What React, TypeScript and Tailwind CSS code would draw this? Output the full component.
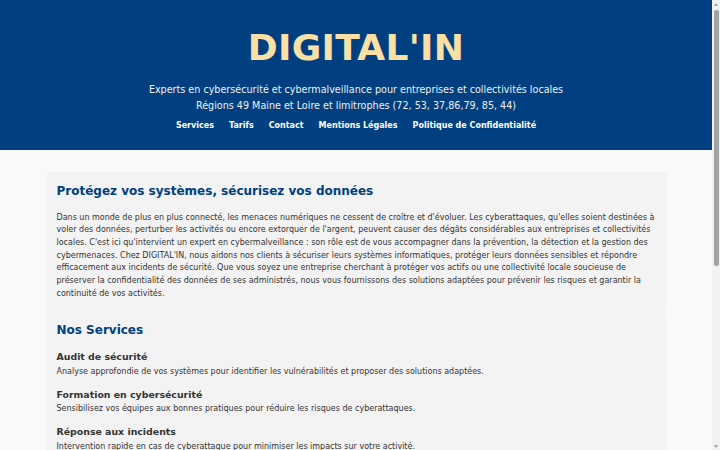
import React from "react";

const services = [
  {
    t: "Audit de sécurité",
    d: "Analyse approfondie de vos systèmes pour identifier les vulnérabilités et proposer des solutions adaptées.",
  },
  {
    t: "Formation en cybersécurité",
    d: "Sensibilisez vos équipes aux bonnes pratiques pour réduire les risques de cyberattaques.",
  },
  {
    t: "Réponse aux incidents",
    d: "Intervention rapide en cas de cyberattaque pour minimiser les impacts sur votre activité.",
  },
  {
    t: "Accompagnement et conseil",
    d: "Un suivi personnalisé pour renforcer durablement la sécurité de votre organisation.",
  },
];

function Scrollbar() {
  return (
    <div className="w-[8px] h-screen bg-[#f1f1f1] flex flex-col items-center shrink-0">
      <div className="h-[8px] flex items-center justify-center">
        <div className="w-0 h-0 border-x-[2px] border-x-transparent border-b-[3px] border-b-[#a0a0a0]" />
      </div>
      <div className="mt-[2px] w-[5px] h-[256px] rounded-[2px] bg-[#a3a3a3]" />
      <div className="flex-1" />
      <div className="h-[8px] flex items-center justify-center">
        <div className="w-0 h-0 border-x-[2px] border-x-transparent border-t-[3px] border-t-[#a0a0a0]" />
      </div>
    </div>
  );
}

export default function App() {
  return (
    <div
      className="h-screen flex bg-[#f9f9f9] text-[#333]"
      style={{ fontFamily: '"DejaVu Sans", Verdana, sans-serif' }}
    >
      <div className="flex-1 min-w-0 h-screen overflow-hidden">
        <header className="bg-[#004080] h-[150px] flex flex-col items-center text-center">
          <h1 className="mt-[26px] text-[36px] leading-[44px] font-bold text-[#fbe0a5] tracking-[0.3px]">
            DIGITAL'IN
          </h1>
          <div className="mt-[12px] text-[9.6px] leading-[16px] text-[#f0f0f0]">
            <p>Experts en cybersécurité et cybermalveillance pour entreprises et collectivités locales</p>
            <p>Régions 49 Maine et Loire et limitrophes (72, 53, 37,86,79, 85, 44)</p>
          </div>
          <nav className="mt-[5px] flex gap-[15px] text-[8px] leading-[13px] font-bold text-white">
            <span>Services</span>
            <span>Tarifs</span>
            <span>Contact</span>
            <span>Mentions Légales</span>
            <span>Politique de Confidentialité</span>
          </nav>
        </header>

        <main className="w-[619px] mx-auto pt-[22px] pb-[20px] flex flex-col gap-[2px]">
          <section className="bg-[#f3f3f3] px-[10px] pt-[11px] pb-[10px] rounded-[3px] shadow-[0_1px_2px_rgba(0,0,0,0.04)]">
            <h2 className="text-[12px] leading-[16px] font-bold text-[#004080]">
              Protégez vos systèmes, sécurisez vos données
            </h2>
            <p className="mt-[12.5px] text-[8px] leading-[12.7px]">
              Dans un monde de plus en plus connecté, les menaces numériques ne cessent de croître et d'évoluer. Les
              cyberattaques, qu'elles soient destinées à voler des données, perturber les activités ou encore
              extorquer de l'argent, peuvent causer des dégâts considérables aux entreprises et collectivités locales.
              C'est ici qu'intervient un expert en cybermalveillance : son rôle est de vous accompagner dans la
              prévention, la détection et la gestion des cybermenaces. Chez DIGITAL'IN, nous aidons nos clients à
              sécuriser leurs systèmes informatiques, protéger leurs données sensibles et répondre efficacement aux
              incidents de sécurité. Que vous soyez une entreprise cherchant à protéger vos actifs ou une collectivité
              locale soucieuse de préserver la confidentialité des données de ses administrés, nous vous fournissons
              des solutions adaptées pour prévenir les risques et garantir la continuité de vos activités.
            </p>
          </section>

          <section className="bg-[#f3f3f3] px-[10px] pt-[10px] pb-[12px] rounded-[3px] shadow-[0_1px_2px_rgba(0,0,0,0.04)]">
            <h2 className="text-[12px] leading-[16px] font-bold text-[#004080]">Nos Services</h2>
            <div className="mt-[12px] flex flex-col gap-[10px]">
              {services.map((s) => (
                <div key={s.t}>
                  <h3 className="text-[9.4px] leading-[14px] font-bold text-[#333]">{s.t}</h3>
                  <p className="mt-[0.5px] text-[8px] leading-[13px]">{s.d}</p>
                </div>
              ))}
            </div>
          </section>

          <section className="bg-[#f3f3f3] px-[10px] pt-[10px] pb-[12px] rounded-[3px]">
            <h2 className="text-[12px] leading-[16px] font-bold text-[#004080]">Tarifs</h2>
            <p className="mt-[10px] text-[8px] leading-[12.8px]">
              Nos tarifs sont adaptés à la taille de votre structure et à vos besoins. Contactez-nous pour obtenir un
              devis personnalisé et gratuit.
            </p>
          </section>

          <section className="bg-[#f3f3f3] px-[10px] pt-[10px] pb-[12px] rounded-[3px]">
            <h2 className="text-[12px] leading-[16px] font-bold text-[#004080]">Contact</h2>
            <p className="mt-[10px] text-[8px] leading-[12.8px]">
              Pour toute demande d'information, n'hésitez pas à nous contacter par téléphone ou par e-mail.
            </p>
          </section>
        </main>

        <footer className="bg-[#004080] text-white text-center text-[8px] leading-[12px] py-[10px]">
          © 2024 DIGITAL'IN - Tous droits réservés
        </footer>
      </div>
      <Scrollbar />
    </div>
  );
}
